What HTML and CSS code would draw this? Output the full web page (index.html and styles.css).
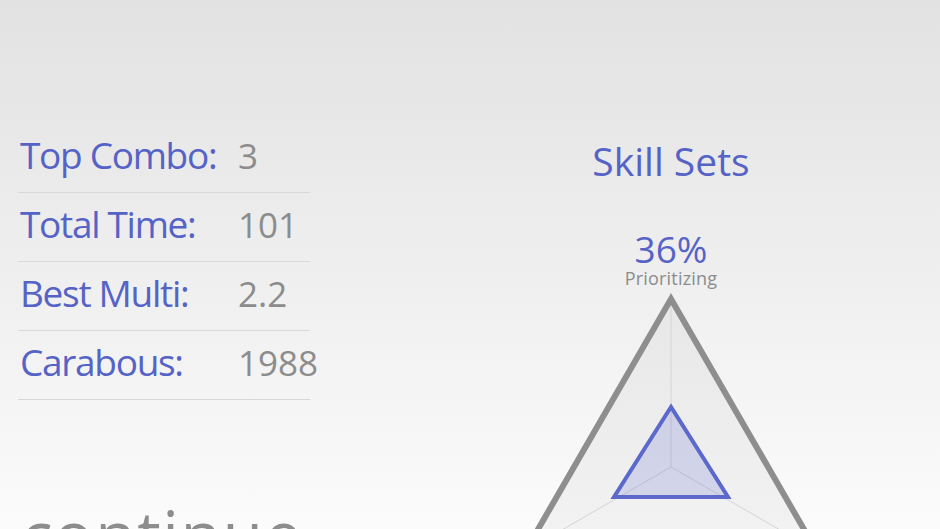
FILE: index.html
```html
<!DOCTYPE html>
<html lang="en">
<head>
<meta charset="utf-8">
<title>Results</title>
<link rel="stylesheet" href="styles.css">
</head>
<body>
<main class="screen">
  <section class="stats">
    <ul class="stat-list">
      <li class="stat-row"><span class="stat-label">Top Combo:</span><span class="stat-value">3</span></li>
      <li class="stat-row"><span class="stat-label">Total Time:</span><span class="stat-value">101</span></li>
      <li class="stat-row"><span class="stat-label">Best Multi:</span><span class="stat-value">2.2</span></li>
      <li class="stat-row"><span class="stat-label">Carabous:</span><span class="stat-value">1988</span></li>
    </ul>
    <div class="continue">continue</div>
  </section>
  <section class="skills">
    <h1 class="skills-title">Skill Sets</h1>
    <div class="skill-pct">36%</div>
    <div class="skill-name">Prioritizing</div>
    <svg class="radar" width="340" height="260" viewBox="0 0 340 260">
      <polygon class="radar-bg" points="170,8 24.5,260 315.5,260"/>
      <line class="radar-axis" x1="170" y1="176" x2="170" y2="8"/>
      <line class="radar-axis" x1="170" y1="176" x2="24.5" y2="260"/>
      <line class="radar-axis" x1="170" y1="176" x2="315.5" y2="260"/>
      <polygon class="radar-value" points="170,116 113,206 227,206"/>
      <polygon class="radar-frame" points="170,8 24.5,260 315.5,260"/>
    </svg>
  </section>
</main>
</body>
</html>
```

FILE: styles.css
```css
html, body {
  margin: 0;
  padding: 0;
  height: 529px;
  overflow: hidden;
}

body {
  background: linear-gradient(to bottom, #e2e2e2 0%, #fbfbfb 100%);
  font-family: "Open Sans", "Noto Sans", sans-serif;
}

.screen {
  display: flex;
  height: 529px;
}

.stats {
  flex: none;
  width: 292px;
  margin-left: 18px;
  padding-top: 124px;
  display: flex;
  flex-direction: column;
}

.stat-list {
  list-style: none;
  margin: 0;
  padding: 0;
}

.stat-row {
  display: flex;
  align-items: baseline;
  height: 62px;
  line-height: 62px;
  padding-bottom: 6px;
  border-bottom: 1px solid #d9d9d9;
}

.stat-label {
  flex: none;
  width: 220px;
  padding-left: 2px;
  box-sizing: border-box;
  white-space: nowrap;
  font-size: 37px;
  letter-spacing: -1.3px;
  color: #5663c6;
}

.stat-value {
  font-size: 35px;
  color: #8c8c8c;
}

.continue {
  margin-top: 100px;
  padding-left: 3px;
  font-size: 66px;
  line-height: 1;
  letter-spacing: 1.5px;
  color: #8d8d8d;
}

.skills {
  flex: none;
  margin-left: 191px;
  width: 340px;
  display: flex;
  flex-direction: column;
  align-items: center;
}

.skills-title {
  margin: 141px 0 0;
  font-size: 39px;
  font-weight: 400;
  line-height: 1;
  color: #5663c6;
}

.skill-pct {
  margin-top: 50px;
  font-size: 37px;
  line-height: 1;
  color: #5663c6;
}

.skill-name {
  margin-top: 2px;
  font-size: 18px;
  line-height: 1;
  letter-spacing: 0.2px;
  color: #8c8c8c;
}

.radar {
  display: block;
  margin-top: 4px;
  flex: none;
}

.radar-bg {
  fill: rgba(0, 0, 0, 0.035);
}

.radar-axis {
  stroke: #d4d4d4;
  stroke-width: 1;
}

.radar-value {
  fill: rgba(91, 104, 204, 0.2);
  stroke: #5b68cc;
  stroke-width: 4;
  stroke-linejoin: miter;
}

.radar-frame {
  fill: none;
  stroke: #8e8e8e;
  stroke-width: 6;
  stroke-linejoin: miter;
}
```
